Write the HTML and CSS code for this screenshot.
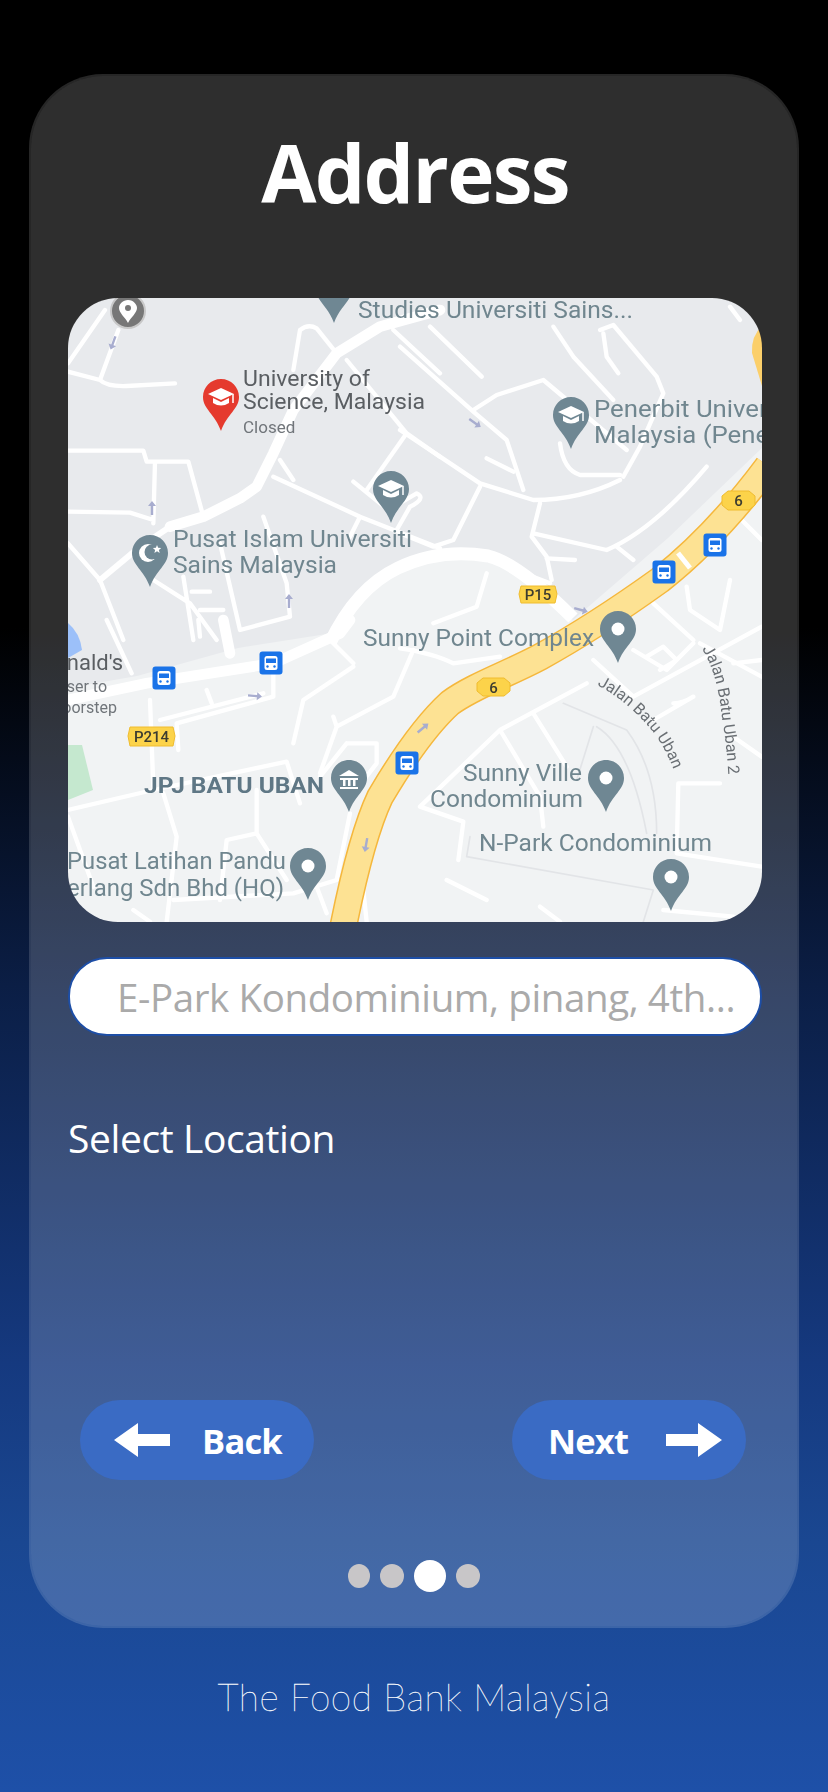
FILE: index.html
```html
<!DOCTYPE html>
<html lang="en">
<head>
<meta charset="utf-8">
<title>Address</title>
<link rel="stylesheet" href="styles.css">
</head>
<body>
<main class="card">
  <h1 class="title">Address</h1>
  <div class="map">
    <svg class="map-art" viewBox="0 0 694 624" width="694" height="624" xmlns="http://www.w3.org/2000/svg">
      <defs>
        <path id="pin" d="M0,-18 C10,-18 18,-10 18,0 C18,12 6,17 0,34 C-6,17 -18,12 -18,0 C-18,-10 -10,-18 0,-18Z"/>
        <g id="capicon"><path d="M0,-9 L13,-3 L0,3 L-13,-3Z" fill="#fff"/><path d="M-8,1 L-8,6 Q0,11 8,6 L8,1 L0,5Z" fill="#fff"/><path d="M12,-3 V6" stroke="#fff" stroke-width="1.5"/></g>
        <g id="bus"><rect x="-11.5" y="-11.5" width="23" height="23" rx="3" fill="#1a73e8"/><rect x="-6.5" y="-7" width="13" height="14" rx="2.5" fill="#fff"/><rect x="-5" y="-4.5" width="10" height="4.5" fill="#1a73e8"/><circle cx="-3.5" cy="3.5" r="1.2" fill="#1a73e8"/><circle cx="3.5" cy="3.5" r="1.2" fill="#1a73e8"/></g>
        <path id="ar" d="M0,-7 L4,-2 L1.2,-2 L1.2,7 L-1.2,7 L-1.2,-2 L-4,-2Z"/>
        <path id="curve1" d="M529,387 Q560,403 586,435 Q604,460 612,492"/>
        <path id="curve2" d="M634,351 Q650,376 654,420 Q660,455 661,494"/>
      </defs>
      <rect class="land" width="694" height="624"/>
      <path class="campus" d="M0,0 H694 V150 L600,240 L505,322 L440,268 L372,256 L320,275 L265,335 L170,350 L69,378 L0,390Z"/>
      <path class="water" d="M0,325 Q12,335 14,352 L0,360Z"/>
      <path class="park" d="M0,447 H14 L25,492 L0,502Z"/>

      <g class="roads" transform="translate(-8,-8) scale(.33333)">
        <g class="w12">
          <path d="M24,220 L135,60M120,270 L175,120M24,245 L120,270 Q140,290 200,288 L345,280"/>
          <path d="M700,240 L720,120 Q745,100 770,115 L830,190M860,210 L1040,430 L1140,500M1040,430 L920,600"/>
          <path d="M24,482 L250,482 L260,515 L385,515 L430,680M285,515 L280,700M24,665 L210,668 L280,690"/>
          <path d="M640,560 L900,680 L1140,775M660,510 L700,570M900,680 L870,740"/>
          <path d="M880,575 L985,660 L1070,610 Q1100,625 1050,650 L1010,720"/>
          <path d="M24,760 L120,870 L190,1050M280,870 L390,940 L470,1050M370,860 L400,1050M395,905 L450,905M420,960 L490,960"/>
          <path d="M480,760 L540,1020 L690,980 L680,880 L610,680M1000,120 L1140,250"/>
        </g>
        <path class="w30" d="M1140,60 L960,110 L830,190 L700,360 L640,490 L590,590 L540,625 L430,680 L330,710"/>
        <path class="w18" d="M330,710 L240,770 L120,870"/>
      </g>
      <g class="roads" transform="translate(332,-8) scale(.33333)">
        <g class="w12">
          <path d="M0,170 L220,365 L320,450 L370,600M90,110 L245,260M220,360 L290,315 L430,270 L680,480"/>
          <path d="M460,110 L520,200 L640,330M600,120 L640,105 L770,260 L790,310 L720,470 L670,560M610,130 L620,200 L655,250"/>
          <path d="M0,420 L120,500 L240,580 L400,630 Q540,630 660,570M480,460 Q490,540 540,555 L660,555"/>
          <path d="M240,590 L160,750 L100,770 L0,730M420,640 L395,740 L440,800 L455,870"/>
          <path d="M400,730 L620,780 Q760,720 920,530M650,770 L700,810M260,505 L340,545M440,805 L525,810M320,830 L450,880"/>
          <path d="M260,850 L230,950 L100,1000M760,940 L880,1050M860,890 L870,960 L960,1020 L990,870M1025,690 L1085,750M990,50 L1020,90"/>
        </g>
      </g>
      <g class="roads" transform="translate(-8,322) scale(.33333)">
        <g class="w12">
          <path d="M140,0 L215,160M415,0 L420,50M270,240 L280,500M300,300 L610,220M640,150 L640,230 L350,310 L355,390M440,210 L455,250"/>
          <path d="M810,60 L880,130M880,140 L730,240 L700,370M1060,90 L1000,230 L830,320 L780,460M820,290 L830,320"/>
          <path d="M24,570 L280,510 L680,425 L720,550M860,370 L950,370 L950,430 L880,520M780,470 L860,370"/>
          <path d="M310,520 L350,650 L320,905M24,590 L100,800M590,510 L590,640 L500,660 L480,840M590,640 L680,780M770,800 L800,880"/>
          <path d="M870,580 L830,780 L700,820 L340,840M220,870 L270,905M910,810 L920,905"/>
        </g>
        <path class="w30" d="M24,240 L260,190 L640,130 L840,40 L870,0"/>
        <path class="w30" d="M490,0 L510,100"/>
      </g>
      <path class="main-road" d="M262,345 Q288,290 330,270 Q372,250 420,258 Q450,265 505,320"/>
      <g class="roads" transform="translate(332,322) scale(.33333)">
        <g class="w12">
          <path d="M0,85 Q100,100 160,130 L300,110M580,120 L700,230 L1085,20M700,90 L800,150 L880,70M740,110 L790,80 L830,120 L780,150"/>
          <path d="M560,190 L300,330 L60,560 L190,605 L175,720M400,280 L500,440M300,330 L420,530 L430,620"/>
          <path d="M760,300 L880,230 Q850,250 820,250M840,490 L960,490M835,490 L830,700 L1085,740M1000,350 L1085,410M1000,130 L1085,120M900,70 L1085,170"/>
          <path d="M140,780 L260,840M420,860 L480,905M790,870 L1000,890"/>
        </g>
        <g class="thin">
          <path d="M490,250 L680,330 Q770,450 770,640M580,320 L530,480M590,320 Q690,380 740,640M210,650 L200,710 L760,810 L730,905"/>
        </g>
      </g>

      <path class="hw-edge" d="M700,168 C665,215 630,252 592,282 C560,305 510,338 472,359 C440,376 405,388 382,405 C360,425 335,460 312,499 C295,535 283,590 275,630"/>
      <path class="hw-fill" d="M700,168 C665,215 630,252 592,282 C560,305 510,338 472,359 C440,376 405,388 382,405 C360,425 335,460 312,499 C295,535 283,590 275,630"/>
      <path class="hw-corner" d="M694,28 Q683,38 684,55 L694,88Z"/>
      <path class="road-cross" d="M610,255 L622,270"/>

      <g class="arrows">
        <use href="#ar" transform="translate(45,45) rotate(200)"/>
        <use href="#ar" transform="translate(84,210)"/>
        <use href="#ar" transform="translate(221,303)"/>
        <use href="#ar" transform="translate(407,125) rotate(125)"/>
        <use href="#ar" transform="translate(513,312) rotate(105)"/>
        <use href="#ar" transform="translate(187,398) rotate(95)"/>
        <use href="#ar" transform="translate(355,430) rotate(50)"/>
        <use href="#ar" transform="translate(298,547) rotate(190)"/>
      </g>

      <g class="shield"><path d="M62,429 H105 L107,438 L105,448 H62 L60,438Z"/><text x="83.5" y="444" class="sh">P214</text></g>
      <g class="shield"><path d="M453,288 H487 L489,296 L487,305 H453 L451,296Z"/><text x="470" y="302" class="sh">P15</text></g>
      <g class="shield"><path d="M660,193 H681 L687,198 V207 L681,212 H660 L654,207 V198Z"/><text x="670.5" y="208" class="sh">6</text></g>
      <g class="shield"><path d="M415,380 H436 L442,385 V393 L436,398 H415 L409,393 V385Z"/><text x="425.5" y="395" class="sh">6</text></g>

      <g class="poi"><text x="290" y="20" textLength="275" lengthAdjust="spacingAndGlyphs">Studies Universiti Sains...</text>
        <text x="105" y="249" textLength="239" lengthAdjust="spacingAndGlyphs">Pusat Islam Universiti</text>
        <text x="105" y="275" textLength="164" lengthAdjust="spacingAndGlyphs">Sains Malaysia</text>
        <text x="526" y="119" textLength="208" lengthAdjust="spacingAndGlyphs">Penerbit Universiti</text>
        <text x="526" y="145" textLength="222" lengthAdjust="spacingAndGlyphs">Malaysia (Penerbit)</text>
        <text x="295" y="348" textLength="231" lengthAdjust="spacingAndGlyphs">Sunny Point Complex</text>
        <text x="-1" y="571" textLength="219" lengthAdjust="spacingAndGlyphs">Pusat Latihan Pandu</text>
        <text x="-16" y="598" textLength="232" lengthAdjust="spacingAndGlyphs">Perlang Sdn Bhd (HQ)</text>
        <text x="395" y="483" textLength="119" lengthAdjust="spacingAndGlyphs">Sunny Ville</text>
        <text x="362" y="509" textLength="153" lengthAdjust="spacingAndGlyphs">Condominium</text>
        <text x="411" y="553" textLength="233" lengthAdjust="spacingAndGlyphs">N-Park Condominium</text>
        <text class="bold" x="76" y="495" textLength="180" lengthAdjust="spacingAndGlyphs">JPJ BATU UBAN</text>
      </g>
      <g class="grey-label">
        <text x="175" y="88" textLength="127" lengthAdjust="spacingAndGlyphs">University of</text>
        <text x="175" y="111" textLength="182" lengthAdjust="spacingAndGlyphs">Science, Malaysia</text>
        <text x="175" y="135" class="small">Closed</text>
        <text x="55" y="372" text-anchor="end">McDonald's</text>
        <text x="39" y="394" text-anchor="end" class="tiny">Closer to</text>
        <text x="49" y="415" text-anchor="end" class="tiny">doorstep</text>
      </g>
      <g class="street">
        <text><textPath href="#curve1">Jalan Batu Uban</textPath></text>
        <text><textPath href="#curve2">Jalan Batu Uban 2</textPath></text>
      </g>

      <g class="pins">
        <use href="#pin" x="266" y="-9"/>
        <use href="#pin" x="323" y="191"/>
        <use href="#pin" x="82" y="255"/>
        <use href="#pin" x="503" y="117"/>
        <use href="#pin" x="550" y="331"/>
        <use href="#pin" x="281" y="480"/>
        <use href="#pin" x="240" y="568"/>
        <use href="#pin" x="538" y="480"/>
        <use href="#pin" x="603" y="579"/>
      </g>
      <use href="#pin" x="153" y="99" class="pin-red"/>
      <use href="#capicon" x="153" y="99"/>
      <use href="#capicon" x="323" y="191"/>
      <use href="#capicon" x="503" y="117"/>
      <g class="crescent"><circle cx="80" cy="255" r="9" fill="#fff"/><circle cx="84" cy="254" r="7.5" fill="#6f8793"/><path d="M89,247 l1.2,2.8 3,.2 -2.3,1.9 .8,3 -2.7,-1.6 -2.6,1.6 .7,-3 -2.2,-1.9 3,-.2Z" fill="#fff"/></g>
      <g class="museum"><path d="M271,478 L281,472 L291,478Z" fill="#fff"/><path d="M272,480 H290 V482 H272ZM275,482 H277.5 V488 H275ZM280,482 H282.5 V488 H280ZM285,482 H287.500 V488 H285ZM272,489 H290 V491 H272Z" fill="#fff"/></g>
      <g class="dots-w"><circle cx="550" cy="331" r="6.500"/><circle cx="240" cy="568" r="6.500"/><circle cx="538" cy="480" r="6.500"/><circle cx="603" cy="579" r="6.500"/></g>
      <g class="photo-pin"><circle cx="60" cy="13" r="17" fill="#777" stroke="#c8c8c8" stroke-width="2"/><path d="M60,2 C66,2 69,7 69,10 C69,15 63,19 60,25 C57,19 51,15 51,10 C51,6 55,2 60,2Z" fill="#fff"/><circle cx="60" cy="10" r="3" fill="#777"/></g>
      <use href="#bus" x="596" y="274"/><use href="#bus" x="647" y="247"/><use href="#bus" x="203" y="365"/><use href="#bus" x="96" y="380"/><use href="#bus" x="339" y="465"/>
    </svg>
  </div>
  <div class="field"><span class="field-text">E-Park Kondominium, pinang, 4th...</span></div>
  <p class="label">Select Location</p>
  <div class="nav">
    <button class="btn btn-back" type="button">
      <svg class="arrow" viewBox="0 0 56 34" width="56" height="34"><path d="M56,11 H24 V0 L0,17 L24,34 V23 H56Z" fill="#fff"/></svg>
      <span>Back</span>
    </button>
    <button class="btn btn-next" type="button">
      <span>Next</span>
      <svg class="arrow" viewBox="0 0 56 34" width="56" height="34"><path d="M0,11 H32 V0 L56,17 L32,34 V23 H0Z" fill="#fff"/></svg>
    </button>
  </div>
  <div class="dots"><i class="dot dot-first"></i><i class="dot"></i><i class="dot active"></i><i class="dot"></i></div>
</main>
<footer class="foot">The Food Bank Malaysia</footer>
</body>
</html>
```
FILE: styles.css
```css
* { box-sizing: border-box; }
html, body { margin: 0; height: 1792px; overflow: hidden; }
body {
  width: 828px;
  background: linear-gradient(180deg, #000 0, #000 35%, #0b1e45 55%, #15397f 76%, #1a4791 86%, #1e50a8 100%);
  font-family: "Open Sans", "Liberation Sans", sans-serif;
  color: #fff;
  padding-top: 74px;
}
.card {
  width: 770px;
  height: 1554px;
  margin-left: 29px;
  padding: 46px 35px 0 37px;
  border: 2px solid rgba(255, 255, 255, .15);
  background-clip: padding-box;
  border-radius: 74px;
  background-color: rgba(255, 255, 255, .18);
  display: flex;
  flex-direction: column;
}
.title {
  margin: 0;
  height: 176px;
  text-align: center;
  font-size: 80px;
  line-height: 100px;
  font-weight: 700;
  letter-spacing: -1.7px;
}
.map {
  width: 694px;
  height: 624px;
  border-radius: 50px;
  overflow: hidden;
  flex: none;
}
.map-art { display: block; filter: blur(.6px); }
.land { fill: #f1f3f4; }
.campus { fill: #e8eaed; }
.water { fill: #9cc0f9; }
.park { fill: #c5e8cf; }
.roads path { fill: none; stroke: #fff; stroke-linejoin: round; stroke-linecap: round; }
.w12 path { stroke-width: 13; }
.roads .w30 { stroke-width: 32; }
.roads .w18 { stroke-width: 18; }
.main-road { fill: none; stroke: #fff; stroke-width: 13; }
.thin path { stroke: #e2e4e7; stroke-width: 5; }
.hw-edge, .hw-fill { fill: none; stroke-linejoin: round; }
.hw-edge { stroke: #f5b73c; stroke-width: 28; }
.hw-fill { stroke: #fde293; stroke-width: 25; }
.hw-corner { fill: #fbcf6a; }
.road-cross { stroke: #fff; stroke-width: 5; }
.arrows use { fill: #a8adcf; }
.shield path { fill: #fcd34a; stroke: #f0bc2e; stroke-width: 1; }
.sh { font: 500 15px Roboto, sans-serif; fill: #3c3c30; text-anchor: middle; }
.poi text { font: 400 23px Roboto, sans-serif; fill: #70868f; }
.poi .bold { font-weight: 700; fill: #5f7785; font-size: 22px; }
.grey-label text { font: 400 22px Roboto, sans-serif; fill: #5a5e62; }
.grey-label .small { font-size: 17px; fill: #70757a; }
.grey-label .tiny { font-size: 16px; fill: #70757a; }
.street text { font: 400 16px Roboto, sans-serif; fill: #6a6f74; }
.pins use { fill: #6f8793; }
.pin-red { fill: #e53a2e; }
.dots-w circle { fill: #fff; }
.field {
  margin-top: 35px;
  height: 79px;
  border: 2px solid #1d4ea6;
  border-radius: 39px;
  background: #fff;
  padding-left: 47px;
  display: flex;
  align-items: center;
  flex: none;
  width: 694px;
}
.field-text { font-size: 38.5px; color: #aaa; letter-spacing: -.4px; white-space: nowrap; }
.label { margin: 77px 0 0; font-size: 39px; line-height: 50px; letter-spacing: -.4px; }
.nav {
  margin: 237px 16px 0 12px;
  display: flex;
  justify-content: space-between;
  flex: none;
}
.btn {
  width: 234px;
  height: 80px;
  border: 0;
  border-radius: 40px;
  background: #3a6bc4;
  color: #fff;
  font: 700 34.5px "Open Sans", sans-serif;
  letter-spacing: -.8px;
  display: flex;
  align-items: center;
  justify-content: flex-start;
  padding: 0;
}
.btn-back { padding-left: 34px; gap: 32px; }
.btn-next { padding-left: 36px; gap: 38px; }
.dots {
  margin-top: 80px;
  padding-left: 280px;
  display: flex;
  align-items: center;
  gap: 10px;
}
.dot { width: 24px; height: 24px; border-radius: 50%; background: #c8c6c8; display: block; }
.dot-first { width: 22px; }
.active { width: 32px; height: 32px; background: #fff; }
.foot {
  margin-top: 47px;
  text-align: center;
  font: 200 37px Lato, Inter, sans-serif;
  letter-spacing: .5px;
  line-height: 44px;
  color: #fff;
  -webkit-text-stroke: .3px #fff;
}
```
